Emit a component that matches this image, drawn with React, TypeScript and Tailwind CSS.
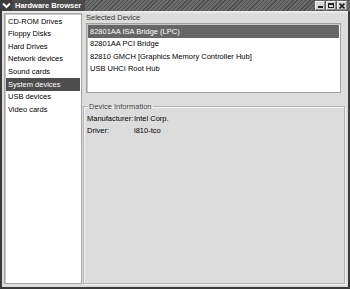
import React from 'react'

const categories = [
  'CD-ROM Drives',
  'Floppy Disks',
  'Hard Drives',
  'Network devices',
  'Sound cards',
  'System devices',
  'USB devices',
  'Video cards',
]

const devices = [
  '82801AA ISA Bridge (LPC)',
  '82801AA PCI Bridge',
  '82810 GMCH [Graphics Memory Controller Hub]',
  'USB UHCI Root Hub',
]

const TitleButton: React.FC<{ children: React.ReactNode }> = ({ children }) => (
  <div className="w-[10px] h-[9px] bg-[#d8d8d8] border border-[#f0f0f0] border-r-[#8a8a8a] border-b-[#8a8a8a] flex items-center justify-center">
    {children}
  </div>
)

export default function App() {
  return (
    <div className="w-[350px] h-[289px] bg-[#3a3a3a] flex flex-col font-['Liberation_Sans',Arial,sans-serif] text-[7.5px] text-black select-none">
      {/* title bar */}
      <div className="h-[11px] flex items-center bg-[repeating-linear-gradient(135deg,#4e4e4e_0px,#4e4e4e_1px,#6c6c6c_1px,#6c6c6c_3px)]">
        <div className="w-[12px] h-[11px] flex items-center justify-center bg-[#3c3c3c]">
          <svg width="9" height="7" viewBox="0 0 9 7">
            <path d="M1 1.5 L4.5 5 L8 1.5" stroke="#fff" strokeWidth="2" fill="none" />
          </svg>
        </div>
        <div className="pl-[3px] pr-[4px] h-full flex items-center bg-[#4a4a4a] text-white font-bold text-[7.5px]">
          Hardware Browser
        </div>
        <div className="flex-1" />
        <div className="flex gap-[1px] pr-[3px]">
          <TitleButton>
            <div className="w-[5px] h-[2px] bg-[#222] mt-[3px]" />
          </TitleButton>
          <TitleButton>
            <div className="w-[6px] h-[5px] border border-[#222] border-t-2" />
          </TitleButton>
          <TitleButton>
            <svg width="6" height="6" viewBox="0 0 6 6">
              <path d="M0.5 0.5 L5.5 5.5 M5.5 0.5 L0.5 5.5" stroke="#222" strokeWidth="1.6" />
            </svg>
          </TitleButton>
        </div>
      </div>

      {/* body */}
      <div className="flex-1 mx-[2px] mb-[2px] bg-[#dcdcdc] border-t-2 border-[#eaeaea] flex gap-[1px] pl-[2px] pr-[2px] pb-[3px]">
        {/* category list */}
        <div className="w-[78px] bg-white border border-[#a4a4a4] shadow-[inset_1px_1px_0_#c8c8c8] pt-[1px] px-[1px]">
          {categories.map((c) => (
            <div
              key={c}
              className={
                c === 'System devices'
                  ? 'h-[12.6px] flex items-center pl-[2px] bg-[#4d4d4d] text-white'
                  : 'h-[12.6px] flex items-center pl-[2px]'
              }
            >
              {c}
            </div>
          ))}
        </div>

        {/* right side */}
        <div className="flex-1 flex flex-col">
          <div className="h-[10px] flex items-center pl-[3px] text-[#333]">Selected Device</div>
          <div className="ml-[3px] mr-[5px] h-[70px] bg-white border border-[#a0a0a0] shadow-[inset_1px_1px_0_#c8c8c8] p-[1px]">
            {devices.map((d, i) => (
              <div
                key={d}
                className={
                  i === 0
                    ? 'h-[12.6px] flex items-center pl-[2px] bg-[#666666] text-white'
                    : 'h-[12.6px] flex items-center pl-[2px]'
                }
              >
                {d}
              </div>
            ))}
          </div>

          <fieldset className="mt-[9px] flex-1 border border-[#b2b2b2] shadow-[inset_1px_1px_0_#f2f2f2,1px_1px_0_#f2f2f2] px-[3px] pt-[3px] mr-[1px]">
            <legend className="ml-[1px] px-[1px] text-[#444] leading-[9px]">Device Information</legend>
            <div className="grid grid-cols-[47px_1fr] gap-y-[3px] leading-[9px]">
              <div>Manufacturer:</div>
              <div>Intel Corp.</div>
              <div>Driver:</div>
              <div>i810-tco</div>
            </div>
          </fieldset>
        </div>
      </div>
    </div>
  )
}
